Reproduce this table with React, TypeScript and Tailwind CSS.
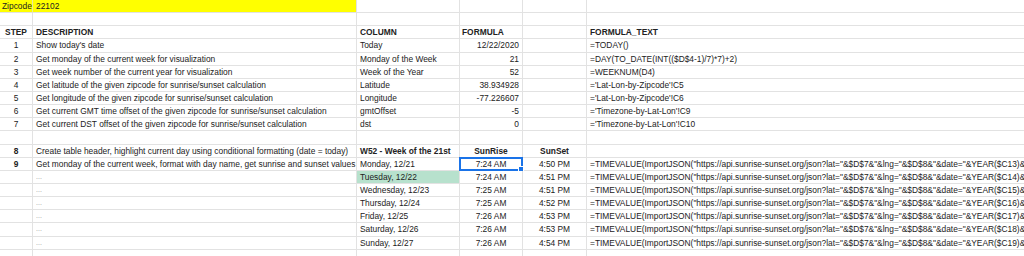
import React from "react";

type Row = {
  a?: string;
  b?: string;
  c?: string;
  d?: string;
  e?: string;
  f?: string;
  dots?: boolean;
  kind?: "zip" | "head" | "step" | "week";
  green?: boolean;
  selected?: boolean;
};

const url = (n: number) =>
  `=TIMEVALUE(ImportJSON("https://api.sunrise-sunset.org/json?lat="&$D$7&"&lng="&$D$8&"&date="&YEAR($C${n})&`;

const days: [string, string, string][] = [
  ["Tuesday, 12/22", "7:24 AM", "4:51 PM"],
  ["Wednesday, 12/23", "7:25 AM", "4:51 PM"],
  ["Thursday, 12/24", "7:25 AM", "4:52 PM"],
  ["Friday, 12/25", "7:26 AM", "4:53 PM"],
  ["Saturday, 12/26", "7:26 AM", "4:53 PM"],
  ["Sunday, 12/27", "7:26 AM", "4:54 PM"],
];

const rows: Row[] = [
  { kind: "zip", a: "Zipcode", b: "22102" },
  {},
  { kind: "head", a: "STEP", b: "DESCRIPTION", c: "COLUMN", d: "FORMULA", f: "FORMULA_TEXT" },
  { kind: "step", a: "1", b: "Show today's date", c: "Today", d: "12/22/2020", f: "=TODAY()" },
  { kind: "step", a: "2", b: "Get monday of the current week for visualization", c: "Monday of the Week", d: "21", f: "=DAY(TO_DATE(INT(($D$4-1)/7)*7)+2)" },
  { kind: "step", a: "3", b: "Get week number of the current year for visualization", c: "Week of the Year", d: "52", f: "=WEEKNUM(D4)" },
  { kind: "step", a: "4", b: "Get latitude of the given zipcode for sunrise/sunset calculation", c: "Latitude", d: "38.934928", f: "='Lat-Lon-by-Zipcode'!C5" },
  { kind: "step", a: "5", b: "Get longitude of the given zipcode for sunrise/sunset calculation", c: "Longitude", d: "-77.226607", f: "='Lat-Lon-by-Zipcode'!C6" },
  { kind: "step", a: "6", b: "Get current GMT time offset of the given zipcode for sunrise/sunset calculation", c: "gmtOffset", d: "-5", f: "='Timezone-by-Lat-Lon'!C9" },
  { kind: "step", a: "7", b: "Get current DST offset of the given zipcode for sunrise/sunset calculation", c: "dst", d: "0", f: "='Timezone-by-Lat-Lon'!C10" },
  {},
  { kind: "week", a: "8", b: "Create table header, highlight current day using conditional formatting (date = today)", c: "W52 - Week of the 21st", d: "SunRise", e: "SunSet" },
  { a: "9", b: "Get monday of the current week, format with day name, get sunrise and sunset values", c: "Monday, 12/21", d: "7:24 AM", e: "4:50 PM", f: url(13), selected: true },
  ...days.map(([c, d, e], i) => ({ b: "...", dots: true, c, d, e, f: url(14 + i), green: i === 0 })),
  {},
  {},
];

const cell = "h-[13.15px] border-b border-r border-[#e2e2e2] overflow-hidden whitespace-nowrap leading-[12px]";

export default function App() {
  return (
    <div
      className="w-[1024px] h-[256px] overflow-hidden bg-white text-[8.4px] text-[#222]"
      style={{ fontFamily: '"Liberation Sans", Arial, sans-serif' }}
    >
      <div className="grid grid-cols-[33px_324px_103px_63px_64px_437px]">
        {rows.map((r, i) => {
          const zip = r.kind === "zip";
          const head = r.kind === "head";
          const week = r.kind === "week";
          return (
            <React.Fragment key={i}>
              <div
                className={`${cell} ${zip ? "bg-[#ffff00] border-r-[#e8e8a0] pl-[2px]" : "text-center"} ${head || r.a === "8" || r.a === "9" ? "font-bold" : ""}`}
              >
                {r.a}
              </div>
              <div
                className={`${cell} pl-[3px] ${zip ? "bg-[#ffff00]" : ""} ${head ? "font-bold" : ""} ${r.dots ? "text-[#999] text-[7px]" : ""}`}
              >
                {r.b}
              </div>
              <div
                className={`${cell} pl-[3px] ${head || week ? "font-bold" : ""} ${r.green ? "bg-[#b7e1cd]" : ""}`}
              >
                {r.c}
              </div>
              <div
                className={`${cell} relative overflow-visible ${head ? "font-bold pl-[2px] text-left" : week ? "font-bold text-center" : r.kind === "step" ? "text-right pr-[3px]" : "text-center"}`}
              >
                {r.d}
                {r.selected && (
                  <span className="absolute -left-px -top-px w-[64px] h-[14.15px] border-2 border-[#1a73e8] pointer-events-none">
                    <span className="absolute -right-[3px] -bottom-[3px] w-[4px] h-[4px] bg-[#1a73e8] border border-white box-content" />
                  </span>
                )}
              </div>
              <div className={`${cell} text-center ${week ? "font-bold" : ""}`}>{r.e}</div>
              <div className={`${cell} border-r-0 pl-[3px] ${head ? "font-bold" : ""}`}>{r.f}</div>
            </React.Fragment>
          );
        })}
      </div>
    </div>
  );
}
